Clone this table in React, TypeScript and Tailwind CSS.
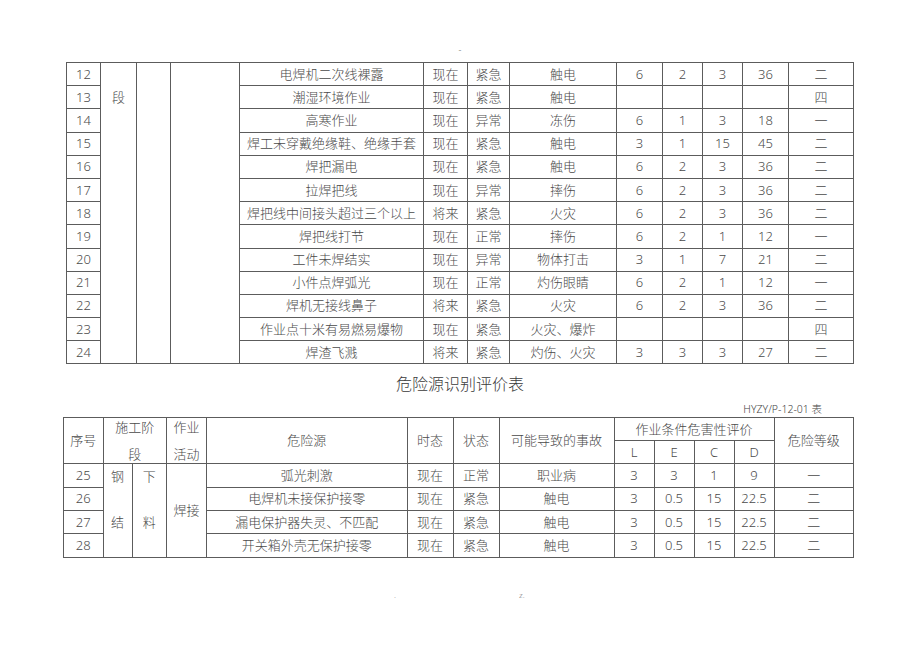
import React from "react";

type Row = [string, string, string, string, string, string, string, string, string, string];

const topRows: Row[] = [
  ["12", "电焊机二次线裸露", "现在", "紧急", "触电", "6", "2", "3", "36", "二"],
  ["13", "潮湿环境作业", "现在", "紧急", "触电", "", "", "", "", "四"],
  ["14", "高寒作业", "现在", "异常", "冻伤", "6", "1", "3", "18", "一"],
  ["15", "焊工未穿戴绝缘鞋、绝缘手套", "现在", "紧急", "触电", "3", "1", "15", "45", "二"],
  ["16", "焊把漏电", "现在", "紧急", "触电", "6", "2", "3", "36", "二"],
  ["17", "拉焊把线", "现在", "异常", "摔伤", "6", "2", "3", "36", "二"],
  ["18", "焊把线中间接头超过三个以上", "将来", "紧急", "火灾", "6", "2", "3", "36", "二"],
  ["19", "焊把线打节", "现在", "正常", "摔伤", "6", "2", "1", "12", "一"],
  ["20", "工件未焊结实", "现在", "异常", "物体打击", "3", "1", "7", "21", "二"],
  ["21", "小件点焊弧光", "现在", "正常", "灼伤眼睛", "6", "2", "1", "12", "一"],
  ["22", "焊机无接线鼻子", "将来", "紧急", "火灾", "6", "2", "3", "36", "二"],
  ["23", "作业点十米有易燃易爆物", "现在", "紧急", "火灾、爆炸", "", "", "", "", "四"],
  ["24", "焊渣飞溅", "将来", "紧急", "灼伤、火灾", "3", "3", "3", "27", "二"],
];

const bottomRows: Row[] = [
  ["25", "弧光刺激", "现在", "正常", "职业病", "3", "3", "1", "9", "一"],
  ["26", "电焊机未接保护接零", "现在", "紧急", "触电", "3", "0.5", "15", "22.5", "二"],
  ["27", "漏电保护器失灵、不匹配", "现在", "紧急", "触电", "3", "0.5", "15", "22.5", "二"],
  ["28", "开关箱外壳无保护接零", "现在", "紧急", "触电", "3", "0.5", "15", "22.5", "二"],
];

const td = "border border-[#5c5c5c] p-0 text-center align-middle leading-none whitespace-nowrap";

function TwoLine({ a, b }: { a: string; b: string }) {
  return (
    <div className="h-[45px] flex flex-col justify-between items-center py-[2px] leading-[14px]">
      <span>{a}</span>
      <span>{b}</span>
    </div>
  );
}

export default function App() {
  return (
    <div
      className="w-[920px] h-[651px] bg-white text-[#4a4a4a] text-[13px] font-light overflow-hidden"
      style={{ fontFamily: '"Noto Sans", "Noto Sans CJK SC", sans-serif' }}
    >
      <div className="h-[62px] flex items-end justify-center pb-[8px] text-[9px] leading-none text-[#666]">-</div>

      <table className="ml-[66px] w-[787px] table-fixed border-collapse">
        <colgroup>
          <col className="w-[34px]" />
          <col className="w-[36px]" />
          <col className="w-[34px]" />
          <col className="w-[69px]" />
          <col className="w-[184px]" />
          <col className="w-[44px]" />
          <col className="w-[42px]" />
          <col className="w-[107px]" />
          <col className="w-[46px]" />
          <col className="w-[40px]" />
          <col className="w-[40px]" />
          <col className="w-[46px]" />
          <col className="w-[65px]" />
        </colgroup>
        <tbody>
          {topRows.map((r, i) => (
            <tr key={r[0]} className="h-[23.2px]">
              <td className={td}>{r[0]}</td>
              {i === 0 && (
                <>
                  <td className={`${td} align-top`} rowSpan={13}>
                    <div className="h-[23.2px]" />
                    <div className="h-[23.2px] flex items-center justify-center">段</div>
                  </td>
                  <td className={td} rowSpan={13}></td>
                  <td className={td} rowSpan={13}></td>
                </>
              )}
              {r.slice(1).map((c, j) => (
                <td key={j} className={td}>{c}</td>
              ))}
            </tr>
          ))}
        </tbody>
      </table>

      <div className="h-[38px] flex items-center justify-center text-[16px] text-[#3a3a3a] leading-none pt-[1px]">
        危险源识别评价表
      </div>
      <div className="ml-[63px] w-[790px] h-[15px] pr-[31px] text-right text-[10.5px] leading-[15px] text-[#444]">
        HYZY/P-12-01 表
      </div>

      <table className="ml-[63px] w-[790px] table-fixed border-collapse">
        <colgroup>
          <col className="w-[39.5px]" />
          <col className="w-[29px]" />
          <col className="w-[34.5px]" />
          <col className="w-[40px]" />
          <col className="w-[200.5px]" />
          <col className="w-[46px]" />
          <col className="w-[46px]" />
          <col className="w-[115px]" />
          <col className="w-[40px]" />
          <col className="w-[40px]" />
          <col className="w-[40px]" />
          <col className="w-[40px]" />
          <col className="w-[79.5px]" />
        </colgroup>
        <tbody>
          <tr className="h-[22.3px]">
            <td className={td} rowSpan={2}>序号</td>
            <td className={td} colSpan={2} rowSpan={2}>
              <TwoLine a="施工阶" b="段" />
            </td>
            <td className={td} rowSpan={2}>
              <TwoLine a="作业" b="活动" />
            </td>
            <td className={td} rowSpan={2}>危险源</td>
            <td className={td} rowSpan={2}>时态</td>
            <td className={td} rowSpan={2}>状态</td>
            <td className={td} rowSpan={2}>可能导致的事故</td>
            <td className={td} colSpan={4}>作业条件危害性评价</td>
            <td className={td} rowSpan={2}>危险等级</td>
          </tr>
          <tr className="h-[23.7px]">
            <td className={td}>L</td>
            <td className={td}>E</td>
            <td className={td}>C</td>
            <td className={td}>D</td>
          </tr>
          {bottomRows.map((r, i) => (
            <tr key={r[0]} className="h-[23.3px]">
              <td className={td}>{r[0]}</td>
              {i === 0 && (
                <>
                  <td className={`${td} align-top`} rowSpan={4}>
                    <div className="h-[23.3px] flex items-center justify-center">钢</div>
                    <div className="h-[23.3px]" />
                    <div className="h-[23.3px] flex items-center justify-center">结</div>
                  </td>
                  <td className={`${td} align-top`} rowSpan={4}>
                    <div className="h-[23.3px] flex items-center justify-center">下</div>
                    <div className="h-[23.3px]" />
                    <div className="h-[23.3px] flex items-center justify-center">料</div>
                  </td>
                  <td className={td} rowSpan={4}>焊接</td>
                </>
              )}
              {r.slice(1).map((c, j) => (
                <td key={j} className={td}>{c}</td>
              ))}
            </tr>
          ))}
        </tbody>
      </table>

      <div className="mt-[33px] ml-[394px] flex gap-[123px] text-[8px] leading-none text-[#777]">
        <span>.</span>
        <span>z.</span>
      </div>
    </div>
  );
}
